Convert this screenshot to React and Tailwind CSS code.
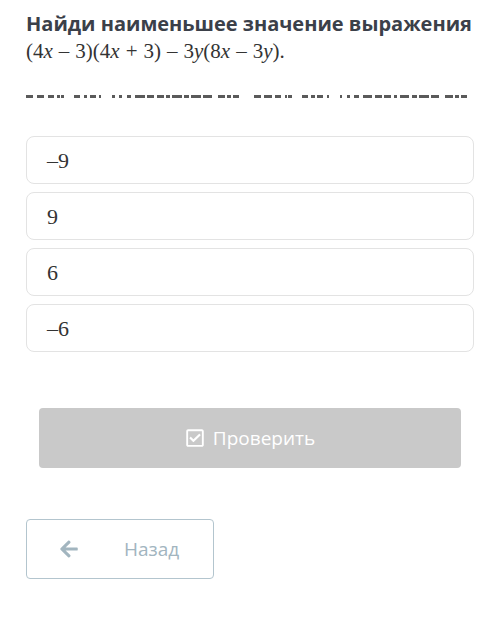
import { FaRegCheckSquare, FaArrowLeft } from 'react-icons/fa'

const options = ['–9', '9', '6', '–6']

// blurred caption row under the expression, drawn as dashes
const dashes = [
  [6, 3], [6, 3], [5, 3], [2, 1], [3, 8],
  [5, 3], [3, 2], [5, 3], [2, 9],
  [2, 4], [2, 4], [4, 3], [8, 2], [6, 2], [6, 2], [3, 2], [8, 2], [4, 2], [8, 2], [7, 5],
  [6, 2], [3, 2], [5, 12],
]

function DashRow() {
  return (
    <div className="flex items-center">
      {dashes.map(([w, g], i) => (
        <span key={i} className="h-[3px] bg-[#5a5a5a]" style={{ width: w * 1.2, marginRight: g * 1.2 }} />
      ))}
    </div>
  )
}

const Op = ({ c }) => <span className="mx-[6px]">{c}</span>

export default function App() {
  return (
    <div className="w-[500px] h-[637px] bg-white px-[26px] pt-[10px] font-['Open_Sans',sans-serif]">
      <h1 className="text-[20px] leading-[28px] font-bold text-[#3b4049]">
        Найди наименьшее значение выражения
      </h1>
      <p className="h-[26px] text-[21px] leading-[26px] text-[#333] font-['Liberation_Serif',serif]">
        (4<i>x</i><Op c="–" />3)(4<i>x</i><Op c="+" />3)<Op c="–" />3<i>y</i>(8<i>x</i><Op c="–" />3<i>y</i>).
      </p>

      <div className="mt-[31px] flex">
        <DashRow />
        <DashRow />
      </div>

      <div className="mt-[38px] flex flex-col gap-[8px]">
        {options.map((o) => (
          <div
            key={o}
            className="h-[48px] rounded-[8px] border border-[#e3e3e3] flex items-center pl-[20px] text-[22px] text-[#333] font-['Liberation_Serif',serif]"
          >
            {o}
          </div>
        ))}
      </div>

      <div className="mt-[56px] px-[13px]">
        <div className="h-[60px] rounded-[4px] bg-[#c9c9c9] flex items-center justify-center gap-[8px] text-white text-[19px]">
          <FaRegCheckSquare className="w-[20px] h-[20px]" />
          <span>Проверить</span>
        </div>
      </div>

      <div className="mt-[51px] w-[188px] h-[60px] rounded-[4px] border border-[#b3c5ce] flex items-center text-[#a2b5bf] text-[19px]">
        <FaArrowLeft className="ml-[32px] w-[20px] h-[20px]" />
        <span className="ml-[45px]">Назад</span>
      </div>
    </div>
  )
}
